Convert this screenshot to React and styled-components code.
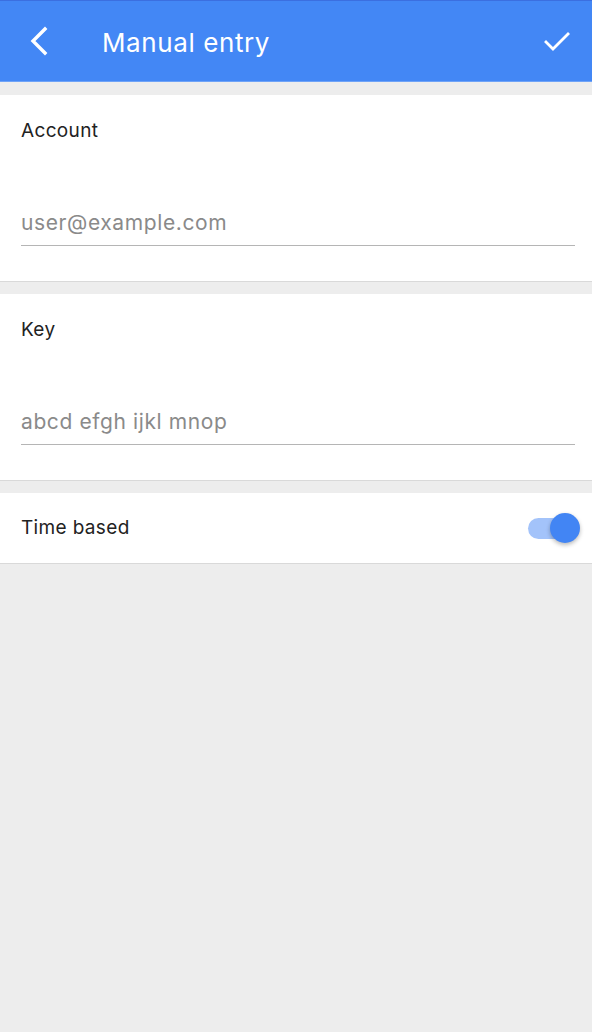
import React, { useState } from "react";
import styled, { createGlobalStyle } from "styled-components";

const Global = createGlobalStyle`
  html, body { margin: 0; padding: 0; background: #ededed; }
  body { font-family: Inter, Roboto, "Noto Sans", sans-serif; -webkit-font-smoothing: antialiased; }
  * { box-sizing: border-box; }
`;

const Page = styled.div`
  width: 592px;
  min-height: 1032px;
  background: #ededed;
  display: flex;
  flex-direction: column;
`;

const Header = styled.header`
  height: 82px;
  background: #4387f5;
  border-top: 1px solid #3b6fe0;
  border-bottom: 1px solid #6fa3f7;
  display: flex;
  align-items: center;
  padding: 0 20px 0 26px;
  color: #fff;
`;

const IconButton = styled.button`
  background: none;
  border: none;
  padding: 0;
  width: ${(p) => p.$w || "26px"};
  height: 32px;
  display: flex;
  align-items: center;
  justify-content: center;
  cursor: pointer;
`;

const Title = styled.h1`
  flex: 1;
  margin: 2px 0 0 50px;
  font-size: 26px;
  font-weight: 400;
  letter-spacing: 0.6px;
  color: #fff;
`;

const Body = styled.main`
  display: flex;
  flex-direction: column;
  gap: 12px;
  padding-top: 13px;
`;

const Card = styled.section`
  background: #fff;
  border-bottom: 1px solid #d9d9d9;
  padding: ${(p) => p.$pad || "0 17px 0 21px"};
  height: ${(p) => p.$h};
  display: flex;
  flex-direction: ${(p) => (p.$row ? "row" : "column")};
  align-items: ${(p) => (p.$row ? "center" : "stretch")};
  justify-content: ${(p) => (p.$row ? "space-between" : "flex-start")};
`;

const Label = styled.div`
  font-size: 19px;
  letter-spacing: 0.35px;
  color: #222;
  margin-top: ${(p) => p.$mt || "0"};
  line-height: 22px;
`;

const Input = styled.input`
  margin-top: 64px;
  border: none;
  border-bottom: 1px solid #b5b5b5;
  outline: none;
  font-family: inherit;
  font-size: 21px;
  letter-spacing: 0.6px;
  color: #333;
  padding: 0 0 6px 0;
  height: 40px;
  background: transparent;
  &::placeholder { color: #8a8a8a; }
`;

const Track = styled.button`
  position: relative;
  width: 42px;
  height: 21px;
  border-radius: 11px;
  border: none;
  padding: 0;
  background: ${(p) => (p.$on ? "#a3c3fa" : "#c8c8c8")};
  cursor: pointer;
`;

const Thumb = styled.span`
  position: absolute;
  top: 50%;
  left: ${(p) => (p.$on ? "22px" : "-8px")};
  width: 30px;
  height: 30px;
  margin-top: -15px;
  border-radius: 50%;
  background: ${(p) => (p.$on ? "#4285f4" : "#f5f5f5")};
  box-shadow: 0 2px 4px rgba(0, 0, 0, 0.28);
`;

export default function App() {
  const [on, setOn] = useState(true);
  return (
    <Page>
      <Global />
      <Header>
        <IconButton aria-label="Back">
          <svg width="22" height="30" viewBox="0 0 22 30">
            <path d="M17 3 L5 15 L17 27" fill="none" stroke="#fff" strokeWidth="3.4" strokeLinecap="square" strokeLinejoin="miter" />
          </svg>
        </IconButton>
        <Title>Manual entry</Title>
        <IconButton aria-label="Save" $w="30px">
          <svg width="30" height="24" viewBox="0 0 30 24">
            <path d="M4 13 L11 20 L26 5" fill="none" stroke="#fff" strokeWidth="2.8" strokeLinecap="square" />
          </svg>
        </IconButton>
      </Header>
      <Body>
        <Card $h="187px">
          <Label $mt="25px">Account</Label>
          <Input placeholder="user@example.com" />
        </Card>
        <Card $h="187px">
          <Label $mt="25px">Key</Label>
          <Input placeholder="abcd efgh ijkl mnop" />
        </Card>
        <Card $h="71px" $row $pad="0 22px 0 21px">
          <Label>Time based</Label>
          <Track $on={on} onClick={() => setOn(!on)} aria-label="Time based">
            <Thumb $on={on} />
          </Track>
        </Card>
      </Body>
    </Page>
  );
}
